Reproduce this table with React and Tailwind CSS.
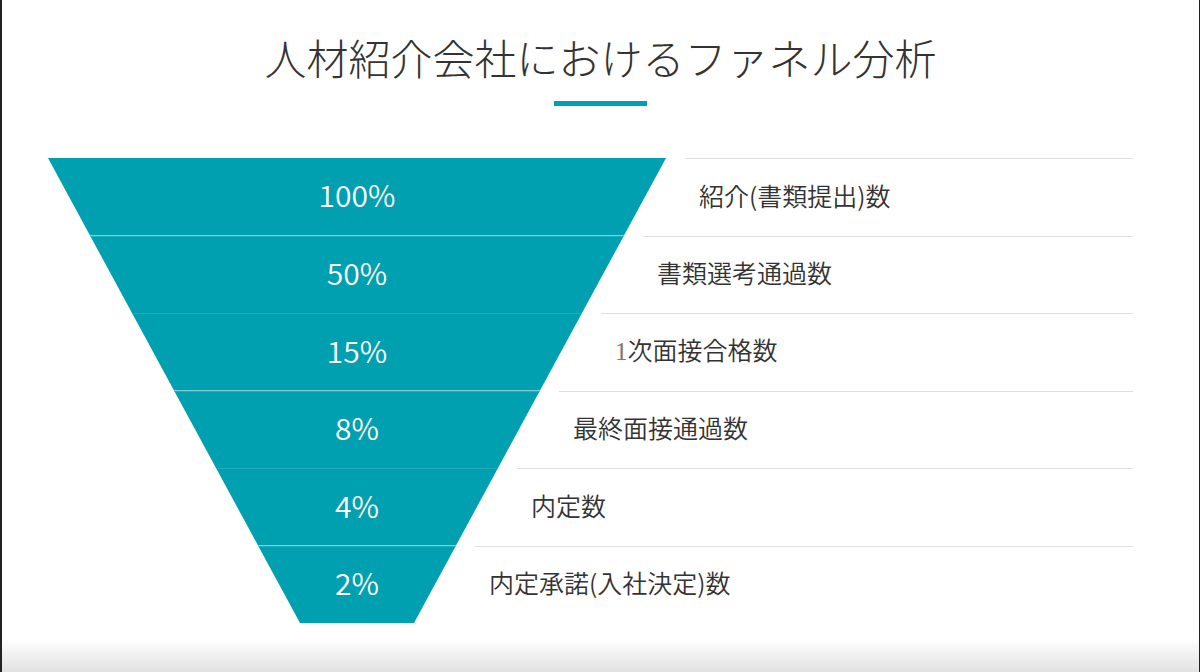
import React from 'react';

const stages = [
    { rate: '100%', label: <>紹介(書類提出)数</> },
    { rate: '50%', label: <>書類選考通過数</> },
    { rate: '15%', label: <><span className="font-['Liberation_Serif',serif] text-[#777]">1</span>次面接合格数</> },
    { rate: '8%', label: <>最終面接通過数</> },
    { rate: '4%', label: <>内定数</> },
    { rate: '2%', label: <>内定承諾(入社決定)数</> },
];

// funnel geometry (px)
const FUNNEL_W = 618;
const STEP = 42;
const GAP = 19;

const FunnelRow = ({ index, rate, label }) => {
    const topIn = STEP * index;
    const bottomIn = STEP * (index + 1);
    const clip = `polygon(${topIn}px 0, ${FUNNEL_W - topIn}px 0, ${FUNNEL_W - bottomIn}px 100%, ${bottomIn}px 100%)`;

    return (
        <div className="flex h-[77.5px]">
            <div
                className={`w-[618px] shrink-0 bg-[#00a0b0] flex items-center justify-center pb-[4px] text-white text-[30px] font-[350] ${index > 0 ? 'border-t border-[#22abba]' : ''}`}
                style={{ clipPath: clip }}
            >
                {rate}
            </div>
            <div
                className="flex-1 border-t border-[#dedede] flex items-center pl-[14px] pb-[4px] text-[25px] text-[#333] font-[350]"
                style={{ marginLeft: GAP - topIn }}
            >
                <span>{label}</span>
            </div>
        </div>
    );
};

const App = () => {
    return (
        <div className="w-[1200px] h-[672px] bg-white border-l-2 border-r border-[#222] flex flex-col font-['Noto_Sans_CJK_JP',sans-serif] overflow-hidden">
            <div className="pt-[27px] flex flex-col items-center">
                <h1 className="text-[42px] leading-[59px] text-[#333] font-light">
                    人材紹介会社におけるファネル分析
                </h1>
                <div className="mt-[15px] w-[93px] h-[5px] bg-[#00a0b0]" />
            </div>

            <div className="mt-[52px] pl-[46px] pr-[66px] flex flex-col">
                {stages.map((s, i) => (
                    <FunnelRow key={i} index={i} rate={s.rate} label={s.label} />
                ))}
            </div>

            <div className="mt-auto h-[34px] bg-gradient-to-b from-white to-[#e2e2e2]" />
        </div>
    );
};

export default App;
